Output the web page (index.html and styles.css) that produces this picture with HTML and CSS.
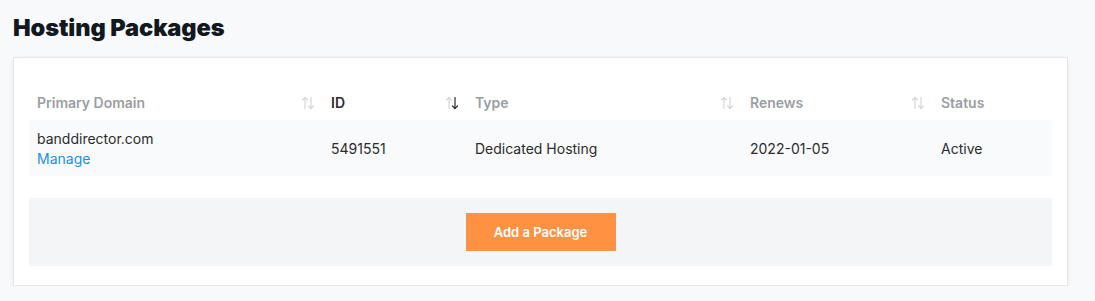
FILE: index.html
```html
<!DOCTYPE html>
<html lang="en">
<head>
    <meta charset="UTF-8">
    <meta name="viewport" content="width=device-width, initial-scale=1.0">
    <title>Hosting Packages</title>
    <link rel="stylesheet" href="styles.css">
</head>
<body>
    <h1 class="page-title">Hosting Packages</h1>

    <div class="card">
        <table class="packages">
            <colgroup>
                <col class="col-domain">
                <col class="col-id">
                <col class="col-type">
                <col class="col-renews">
                <col class="col-status">
            </colgroup>
            <thead>
                <tr>
                    <th><div class="th-inner">Primary Domain <span class="sort"></span></div></th>
                    <th class="active"><div class="th-inner">ID <span class="sort desc"></span></div></th>
                    <th><div class="th-inner">Type <span class="sort"></span></div></th>
                    <th><div class="th-inner">Renews <span class="sort"></span></div></th>
                    <th><div class="th-inner">Status</div></th>
                </tr>
            </thead>
            <tbody>
                <tr>
                    <td>
                        <div>banddirector.com</div>
                        <a href="#" class="manage">Manage</a>
                    </td>
                    <td>5491551</td>
                    <td>Dedicated Hosting</td>
                    <td>2022-01-05</td>
                    <td>Active</td>
                </tr>
            </tbody>
        </table>

        <div class="card-footer">
            <button class="btn-add">Add a Package</button>
        </div>
    </div>

    <script>
        // sort icon: up arrow + down arrow
        var icon = '<svg width="14" height="16" viewBox="0 0 14 16" fill="none" stroke-width="1.2" stroke-linecap="round">' +
            '<g class="up"><path d="M4 2.5 V13.5"/><path d="M1.5 5 L4 2.5 L6.5 5"/></g>' +
            '<g class="down"><path d="M10 2.5 V13.5"/><path d="M7.5 11 L10 13.5 L12.5 11"/></g>' +
            '</svg>';
        document.querySelectorAll('.sort').forEach(function (el) {
            el.innerHTML = icon;
        });
    </script>
</body>
</html>
```

FILE: styles.css
```css
* {
    margin: 0;
    padding: 0;
    box-sizing: border-box;
}

body {
    background: #f8f9fb;
    font-family: Inter, "Noto Sans", Arial, sans-serif;
    font-size: 14px;
    color: #2b2b2b;
    padding: 13px 27px 0 13px;
}

.page-title {
    font-size: 23.6px;
    font-weight: 900;
    color: #111820;
    letter-spacing: -0.1px;
    line-height: 30px;
    margin-bottom: 14px;
}

/* Card */
.card {
    background: #fff;
    border: 1px solid #e6e7ea;
    box-shadow: 0 2px 6px rgba(0, 0, 0, 0.06);
    padding: 16px 15px 19px 15px;
}

.packages {
    width: 100%;
    border-collapse: collapse;
    table-layout: fixed;
}

.col-domain { width: 294px; }
.col-id { width: 144px; }
.col-type { width: 275px; }
.col-renews { width: 191px; }

.packages th {
    text-align: left;
    font-weight: 600;
    color: #9a9ea4;
    padding: 19px 8px 7px 8px;
    line-height: 20px;
}

.packages th.active {
    color: #2b2b2b;
}

.th-inner {
    display: flex;
    justify-content: space-between;
    align-items: center;
}

.sort {
    display: flex;
    color: #d3d5d8;
}

.sort svg {
    stroke: currentColor;
}

.sort.desc .down {
    stroke: #2b2b2b;
}

.packages td {
    background: #f9fafb;
    padding: 9px 8px 7px 8px;
    line-height: 20px;
    vertical-align: middle;
}

.manage {
    color: #1d8fe8;
    text-decoration: none;
}

/* Footer */
.card-footer {
    margin-top: 22px;
    background: #f4f5f7;
    padding: 15px 0;
    display: flex;
    justify-content: center;
}

.btn-add {
    background: #ff9142;
    color: #fff;
    border: none;
    width: 150px;
    height: 38px;
    font-family: inherit;
    font-size: 13px;
    font-weight: 600;
    cursor: pointer;
}
```
